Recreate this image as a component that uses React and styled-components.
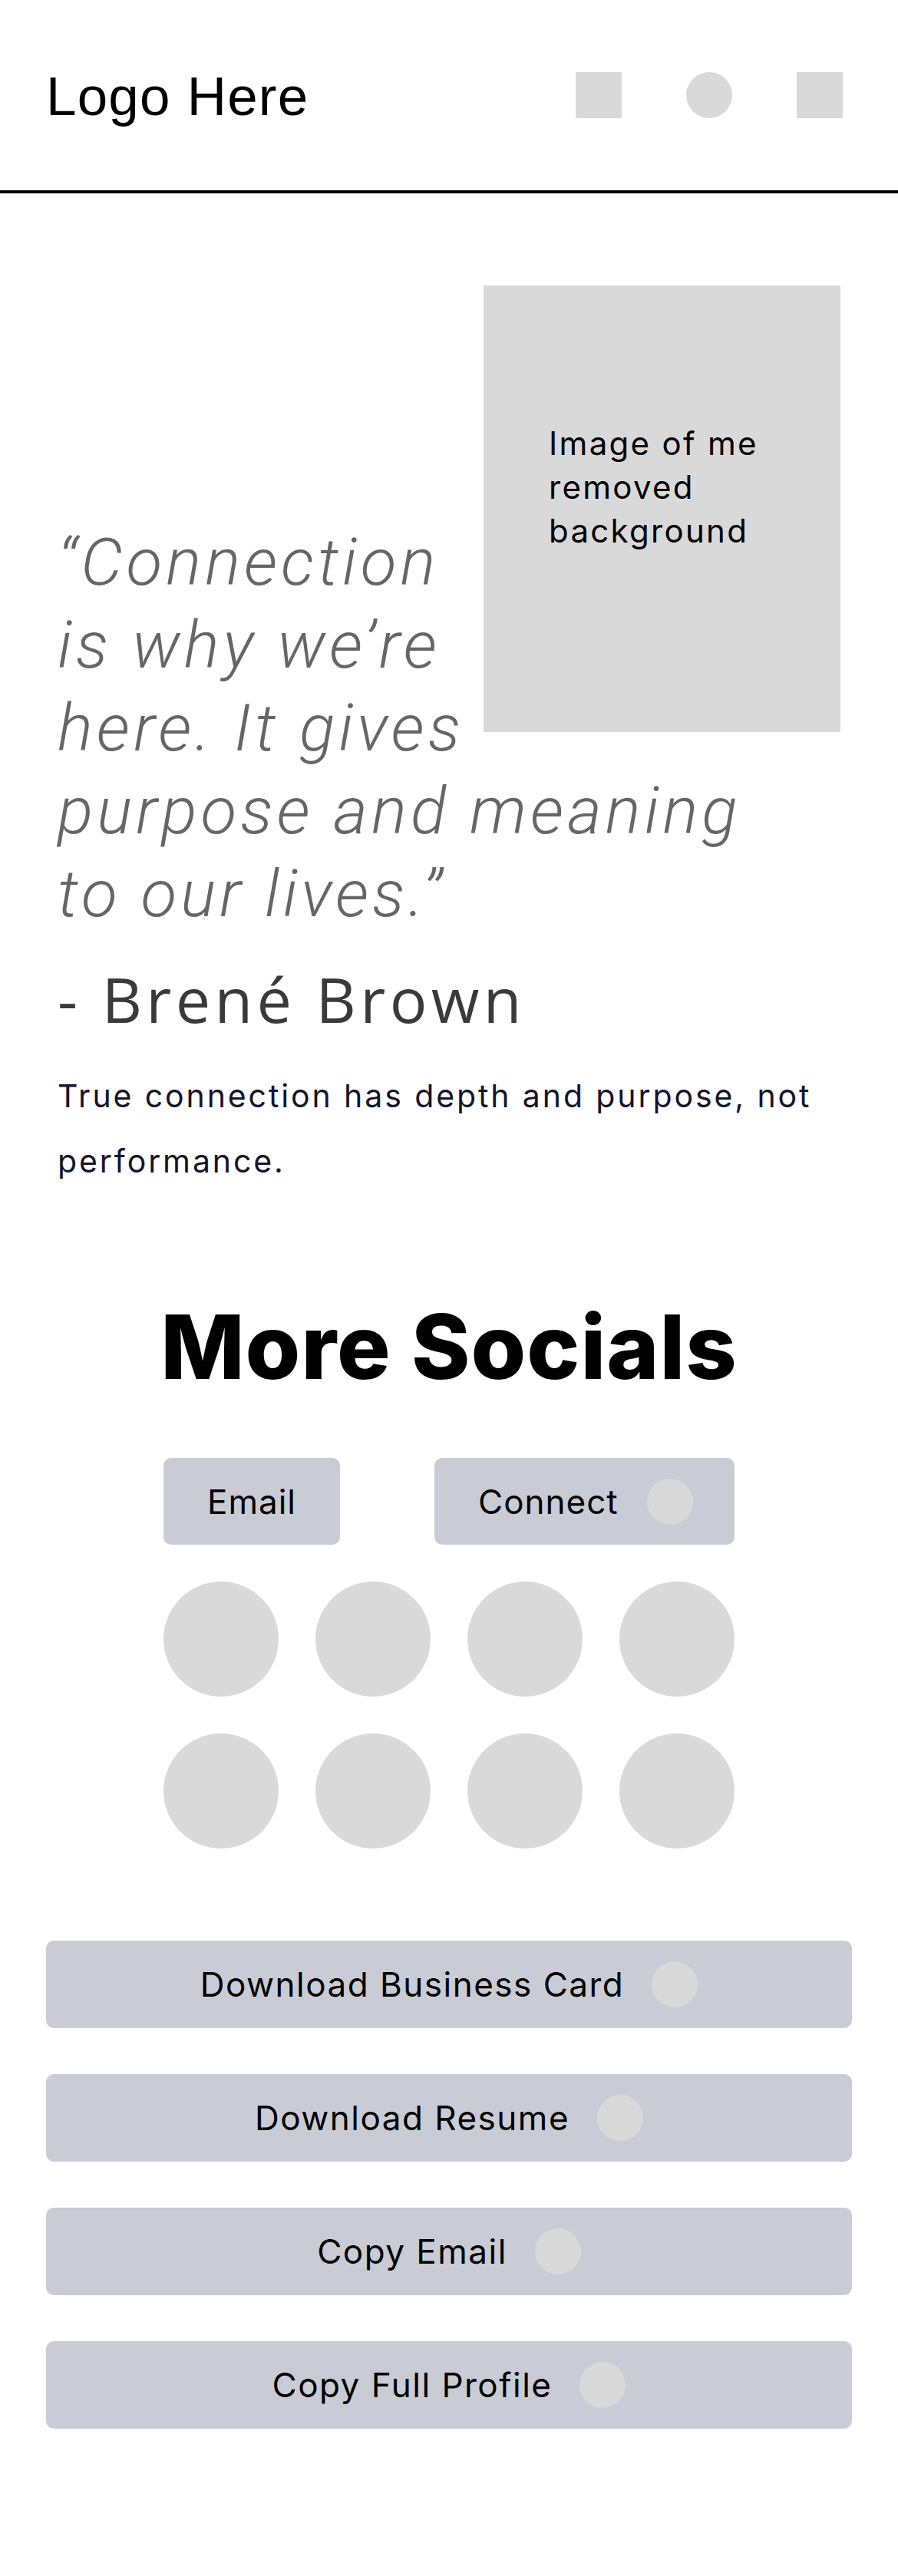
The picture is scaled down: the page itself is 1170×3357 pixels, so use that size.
import styled, { createGlobalStyle } from "styled-components";

const GlobalStyle = createGlobalStyle`
    html, body {
        margin: 0;
        padding: 0;
        background: #ffffff;
    }
    body {
        font-family: "Inter", "Liberation Sans", sans-serif;
        color: #000;
    }
    * {
        box-sizing: border-box;
    }
`

const socials = Array.from({ length: 8 }, (_, i) => i);

const actions = [
    "Download Business Card",
    "Download Resume",
    "Copy Email",
    "Copy Full Profile",
];

const App = () => {
    return (
        <Page>
            <GlobalStyle />
            <Header>
                <Logo>Logo Here</Logo>
                <NavIcons>
                    <NavIcon />
                    <NavIcon round />
                    <NavIcon />
                </NavIcons>
            </Header>

            <Hero>
                <Portrait>
                    Image of me<br />removed<br />background
                </Portrait>
                <Quote>
                    “Connection<br />
                    is why we’re<br />
                    here. It gives<br />
                    purpose and meaning<br />
                    to our lives.”
                </Quote>
                <Author>- Brené Brown</Author>
                <Blurb>True connection has depth and purpose, not performance.</Blurb>
            </Hero>

            <Socials>
                <Heading>More Socials</Heading>
                <SocialGrid>
                    <ContactRow>
                        <SmallButton>Email</SmallButton>
                        <SmallButton wide>
                            Connect
                            <Dot />
                        </SmallButton>
                    </ContactRow>
                    <Circles>
                        {socials.map((i) => (
                            <Circle key={i} />
                        ))}
                    </Circles>
                </SocialGrid>
            </Socials>

            <Actions>
                {actions.map((label) => (
                    <ActionButton key={label}>
                        {label}
                        <Dot />
                    </ActionButton>
                ))}
            </Actions>
        </Page>
    )
}

export default App

const Page = styled.div`
    width: 1170px;
    min-height: 3357px;
    background: #fff;
`
const Header = styled.header`
    height: 252px;
    padding: 0 72px 0 60px;
    display: flex;
    justify-content: space-between;
    align-items: center;
    border-bottom: 4px solid #000;
`
const Logo = styled.div`
    font-family: "Liberation Sans", Arial, sans-serif;
    font-size: 71px;
    letter-spacing: 1.2px;
    color: #000;
    padding-top: 2px;
`
const NavIcons = styled.div`
    display: flex;
    gap: 84px;
    align-items: center;
`
const NavIcon = styled.span`
    width: 60px;
    height: 60px;
    background: #d9d9d9;
    border-radius: ${(p) => (p.round ? "50%" : "0")};
`
const Hero = styled.section`
    padding: 120px 75px 0;
    &::after {
        content: "";
        display: block;
        clear: both;
    }
`
const Portrait = styled.div`
    float: right;
    width: 465px;
    height: 582px;
    margin-left: 10px;
    background: #d9d9d9;
    padding: 177px 30px 0 85px;
    font-family: "Inter", sans-serif;
    font-size: 42px;
    line-height: 57px;
    letter-spacing: 2.3px;
    color: #000;
`
const Quote = styled.p`
    margin: 307px 0 0;
    font-family: "Roboto", sans-serif;
    font-weight: 300;
    font-style: italic;
    font-size: 86px;
    line-height: 108px;
    letter-spacing: 5px;
    color: #666666;
`
const Author = styled.h2`
    margin: 33px 0 0;
    font-family: "Open Sans", sans-serif;
    font-weight: 400;
    font-size: 81px;
    line-height: 100px;
    letter-spacing: 5.3px;
    color: #3a3a3a;
`
const Blurb = styled.p`
    margin: 34px 0 0;
    font-family: "Inter", sans-serif;
    font-size: 41px;
    line-height: 85px;
    letter-spacing: 2.9px;
    color: #16142a;
`
const Socials = styled.section`
    padding-top: 130px;
    display: flex;
    flex-direction: column;
    align-items: center;
`
const Heading = styled.h1`
    margin: 0;
    font-family: "Inter", sans-serif;
    font-weight: 800;
    font-size: 116px;
    line-height: 139px;
    letter-spacing: 1px;
    color: #000;
`
const SocialGrid = styled.div`
    width: 744px;
    margin-top: 75px;
    display: flex;
    flex-direction: column;
    gap: 48px;
`
const ContactRow = styled.div`
    display: flex;
    justify-content: space-between;
`
const SmallButton = styled.button`
    height: 113px;
    width: ${(p) => (p.wide ? "391px" : "230px")};
    padding: ${(p) => (p.wide ? "0 54px 0 57px" : "0")};
    border: none;
    border-radius: 10px;
    background: #c9ccd4;
    display: flex;
    align-items: center;
    justify-content: ${(p) => (p.wide ? "space-between" : "center")};
    font-family: "Inter", sans-serif;
    font-size: 44px;
    letter-spacing: 1px;
    color: #000;
`
const Circles = styled.div`
    display: grid;
    grid-template-columns: repeat(4, 150px);
    justify-content: space-between;
    row-gap: 48px;
`
const Circle = styled.span`
    width: 150px;
    height: 150px;
    border-radius: 50%;
    background: #d9d9d9;
`
const Dot = styled.span`
    width: 60px;
    height: 60px;
    flex: none;
    border-radius: 50%;
    background: #d9d9d9;
`
const Actions = styled.section`
    padding: 120px 60px 193px;
    display: flex;
    flex-direction: column;
    gap: 60px;
`
const ActionButton = styled.button`
    height: 114px;
    width: 100%;
    border: none;
    border-radius: 10px;
    background: #c9ccd4;
    display: flex;
    align-items: center;
    justify-content: center;
    gap: 36px;
    font-family: "Inter", sans-serif;
    font-size: 44px;
    letter-spacing: 1.5px;
    color: #000;
`
